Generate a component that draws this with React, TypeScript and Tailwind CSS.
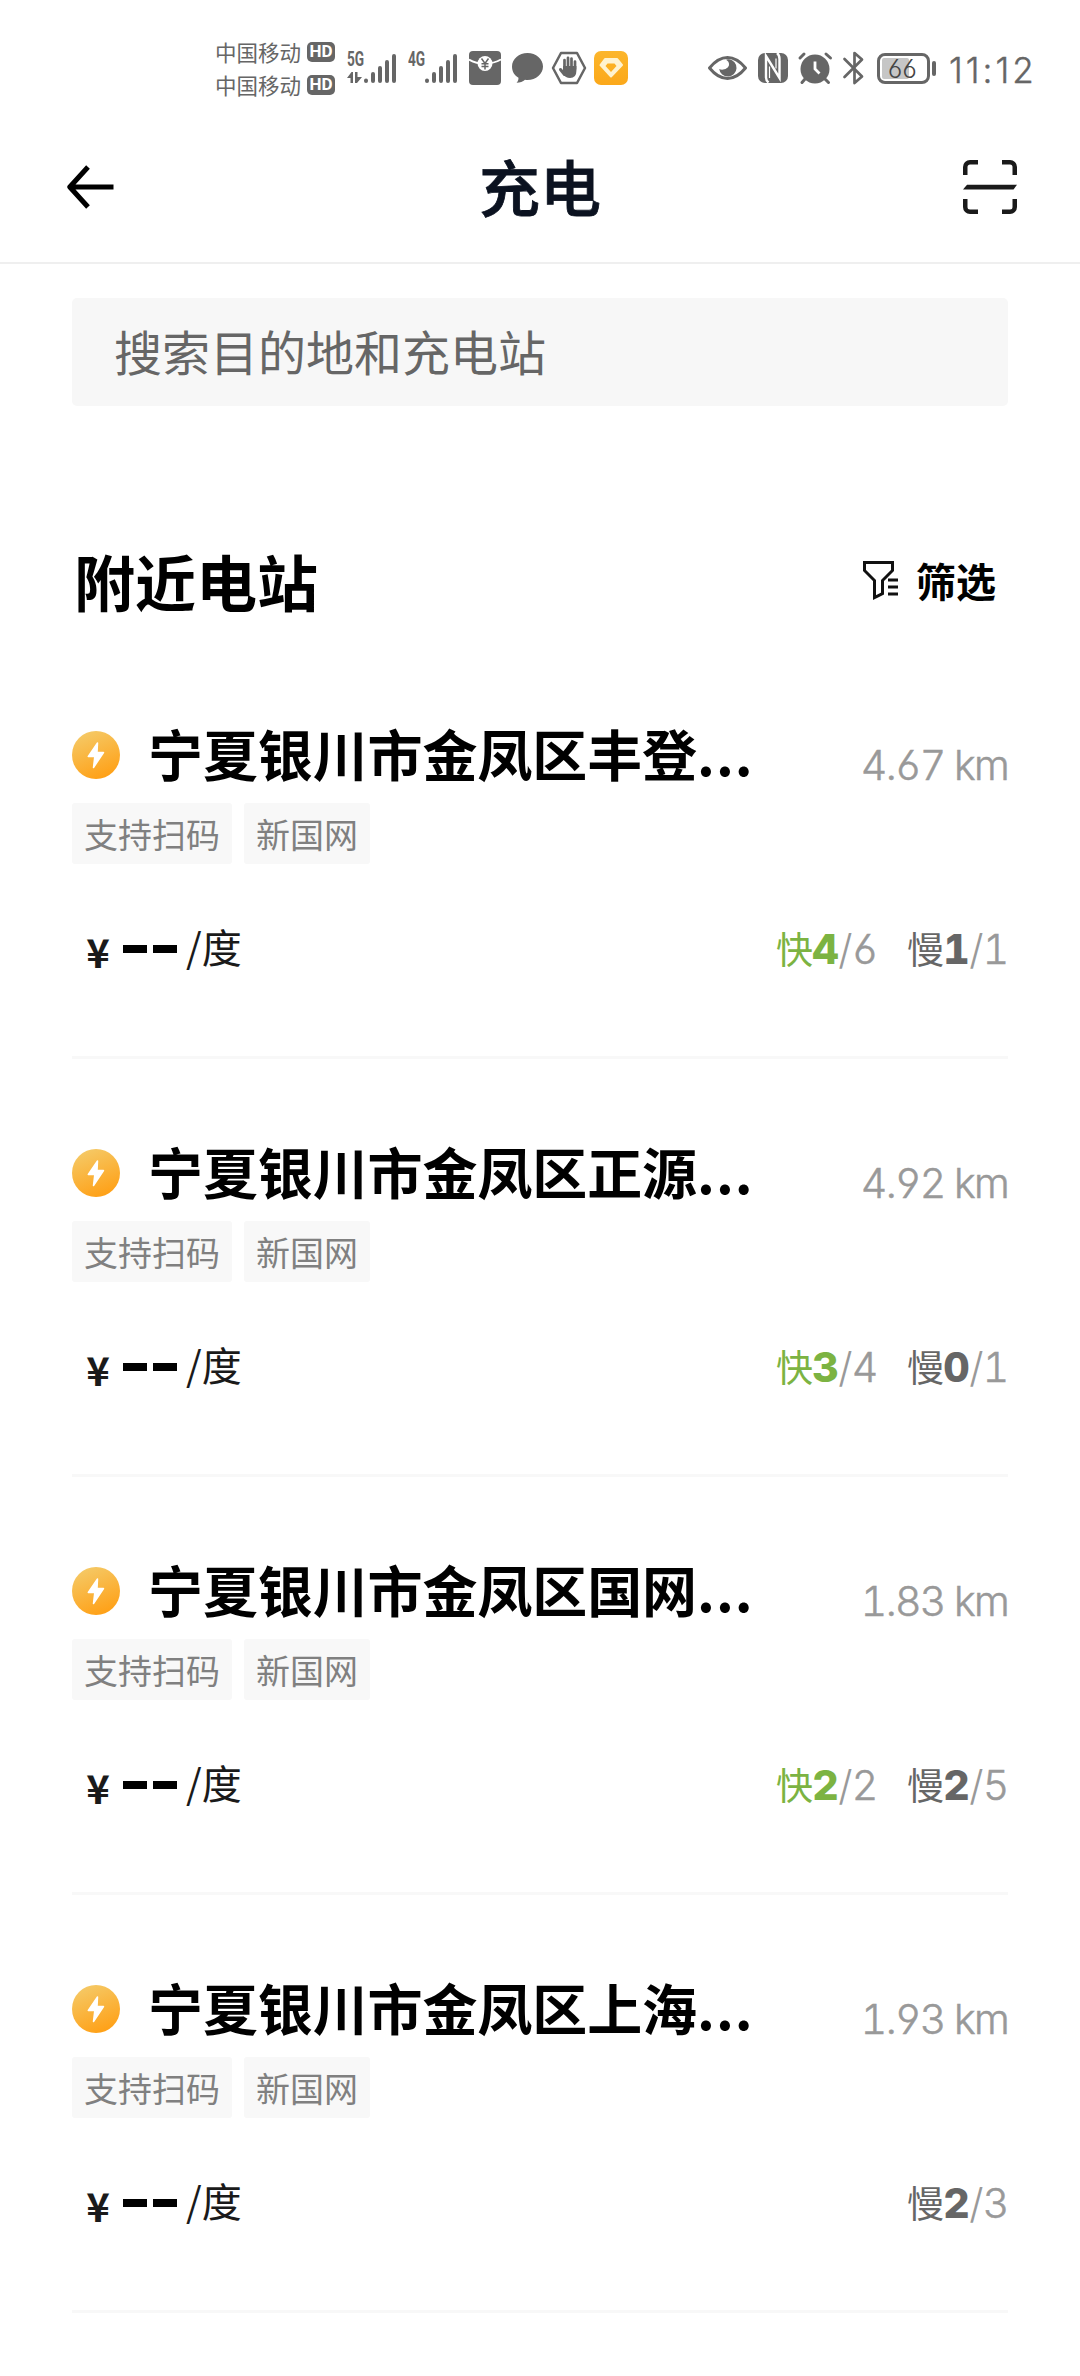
import React from "react";

type Count = { free: number; total: number };
type Station = { name: string; distance: string; fast?: Count; slow: Count };

const stations: Station[] = [
  { name: "宁夏银川市金凤区丰登", distance: "4.67 km", fast: { free: 4, total: 6 }, slow: { free: 1, total: 1 } },
  { name: "宁夏银川市金凤区正源", distance: "4.92 km", fast: { free: 3, total: 4 }, slow: { free: 0, total: 1 } },
  { name: "宁夏银川市金凤区国网", distance: "1.83 km", fast: { free: 2, total: 2 }, slow: { free: 2, total: 5 } },
  { name: "宁夏银川市金凤区上海", distance: "1.93 km", slow: { free: 2, total: 3 } },
];

const latin = "font-['Inter','Noto_Sans_CJK_SC',sans-serif] [font-feature-settings:'cv03','cv04','tnum']";

function Carrier() {
  return (
    <div className="flex h-[33px] items-center gap-[6px]">
      <span className="text-[21.5px] leading-[33px] font-normal">中国移动</span>
      <span className="flex h-[20px] w-[28px] items-center justify-center rounded-[5px] bg-[#666] font-['Roboto',sans-serif] text-[17px] leading-none font-bold text-white">
        HD
      </span>
    </div>
  );
}

function Signal({ label, data }: { label: string; data?: boolean }) {
  return (
    <div className="relative h-[32px] w-[52px]">
      <span className="absolute top-0 left-0 origin-left scale-x-[0.7] font-['Roboto',sans-serif] text-[19.500px] leading-[16px] font-bold">{label}</span>
      <svg className="absolute inset-0" width="52" height="32" viewBox="0 0 52 32">
        <g stroke="#666" strokeWidth="4" strokeLinecap="round">
          <path d="M19 28.500v.5M26 22v7M33 16v13M40 10v19M47 4v25" />
        </g>
        {data && <path d="M0 26l4.500-6h1.500v11H3.500v-5zM8 20h2.500v5H15l-5 6H8z" fill="#666" />}
      </svg>
    </div>
  );
}

function StatusBar() {
  return (
    <div className="flex h-[114px] justify-between pr-[47px] pl-[215px] text-[#666]">
      <div className="flex">
        <div className="flex flex-col pt-[35px]">
          <Carrier />
          <Carrier />
        </div>
        <div className="ml-[12px] flex pt-[52px]">
          <Signal label="5G" data />
          <div className="ml-[9px]">
            <Signal label="4G" />
          </div>
        </div>
        <svg className="mt-[50px] ml-[9px]" width="160" height="36" viewBox="0 0 160 36">
          <rect x="0" y="1" width="32" height="34" rx="4" fill="#666" />
          <path d="M0 9.500Q7 13.500 16 13.500T32 9.500" stroke="#fff" strokeWidth="2" fill="none" />
          <circle cx="16" cy="13.500" r="7.500" fill="#fff" />
          <path d="M12.500 8.500l3.500 5 3.500-5M16 13v6.500M12.500 13.800h7M12.500 16.500h7" stroke="#666" strokeWidth="1.500" fill="none" />
          <path d="M58.500 3C67 3 74 9 74 16.500S67 30 58.500 30c-1 0-1.500 0-2.500-.2-2 2-5 3-8.500 3 1.500-1.300 2-3 2-5C45.500 25.500 43 21.500 43 16.500 43 9 50 3 58.500 3z" fill="#666" />
          <path d="M92 3h16l8 15-8 15H92l-8-15z" stroke="#666" strokeWidth="2.500" strokeLinejoin="round" fill="none" />
          <g stroke="#666" strokeLinecap="round" fill="none">
            <path d="M95.500 19v-9M99 18V7.800M102.500 18V8.500M106 19v-7.500" strokeWidth="2.700" />
            <path d="M91.500 19.500l4 5" strokeWidth="3" />
          </g>
          <path d="M94 16h13.400v5q0 7-6.400 7-4.500 0-7-4z" fill="#666" />
          <rect x="125" y="1" width="34" height="34" rx="7" fill="url(#app)" />
          <path d="M136 9h12l5 6L142 26.500 131.500 15z" fill="#fff3cf" stroke="#fff3cf" strokeWidth="2" strokeLinejoin="round" />
          <path d="M138.500 13.500h7l2 2.500-5.500 6-5.500-6z" fill="#fcb021" />
          <defs>
            <linearGradient id="app" x1="0" y1="0" x2="0" y2="1">
              <stop offset="0" stopColor="#fcb62c" />
              <stop offset="1" stopColor="#fba81a" />
            </linearGradient>
          </defs>
        </svg>
      </div>
      <div className="flex">
        <svg className="mt-[50px]" width="156" height="36" viewBox="0 0 156 36">
          <path d="M1.500 18Q10 7.500 19.500 7.500T37.500 18Q29 28.500 19.500 28.500T1.500 18z" fill="none" stroke="#666" strokeWidth="3" strokeLinejoin="round" />
          <path d="M21 9.300a8.700 8.700 0 1 1-9.800 9.700c3.500 2 9.300-.5 9.800-4 .3-2.500-1-4-3-5.200 1-.4 2-.5 3-.5z" fill="#666" />
          <rect x="50" y="3" width="30" height="30" rx="7" fill="#666" />
          <path d="M60.500 32.500q-2.500-2-2.500-5V6L71.500 28V9q0-4-2.500-6" stroke="#fff" strokeWidth="2.400" fill="none" />
          <path d="M61.500 16.500V28M68 8.500v10" stroke="#fff" strokeWidth="1.200" fill="none" />
          <circle cx="107" cy="19" r="14.500" fill="#666" />
          <path d="M107 11.500V19l4.500 4.500" stroke="#fff" strokeWidth="2.800" fill="none" />
          <path d="M92 8l4-4M118 4l4.500 4M97 29l-3 3.500M117 29l3.500 3.500" stroke="#666" strokeWidth="3" strokeLinecap="round" />
          <path d="M136.500 9L154 26.500l-7.500 6.500V3L154 9.500 136.500 27" stroke="#666" strokeWidth="2.700" fill="none" strokeLinejoin="round" strokeLinecap="round" />
        </svg>
        <div className="mt-[53px] ml-[13px] flex h-[31px] items-center">
          <div className="flex h-[31px] w-[53px] rounded-[8px] border-[3px] border-[#666] p-[2px]">
            <div className={`${latin} h-full w-[27px] rounded-[2px] bg-[#c6c6c6] pl-[5px] text-[25px] leading-[22px] font-light tracking-[-1.700px] text-[#444]`}>66</div>
          </div>
          <div className="ml-[2px] h-[15px] w-[4px] rounded-full bg-[#666]" />
        </div>
        <span className="mt-[50px] ml-[13px] w-[84px] font-['Inter',sans-serif] text-[35px] leading-[40px] font-light tracking-[3px] whitespace-nowrap [-webkit-text-stroke:0.4px_#666]">
          11:12
        </span>
      </div>
    </div>
  );
}

function Header() {
  return (
    <header className="grid h-[150px] grid-cols-[1fr_auto_1fr] items-start border-b-2 border-[#efefef] pr-[63px] pl-[63px]">
      <svg className="mt-[50px] ml-[4px]" width="48" height="46" viewBox="0 0 48 46" fill="none" stroke="#000" strokeWidth="5">
        <path d="M21 3L2.800 23 21 43M3 23h43.500" strokeLinejoin="round" />
      </svg>
      <h1 className="mt-[30px] text-[61px] leading-[84px] font-medium text-[#0b1220] [-webkit-text-stroke:0.8px_#0b1220]">充电</h1>
      <svg className="mt-[46px] justify-self-end" width="54" height="54" viewBox="0 0 54 54" fill="none" stroke="#1a1a1a" strokeWidth="4.500">
        <path d="M2.250 15V7a4.750 4.750 0 0 1 4.750-4.750H15M39 2.250h8A4.750 4.750 0 0 1 51.750 7v8M51.750 39v8A4.750 4.750 0 0 1 47 51.750h-8M15 51.750H7A4.750 4.750 0 0 1 2.250 47v-8" />
        <path d="M4 24.800h50l-3.500 4.700H0z" fill="#1a1a1a" stroke="none" />
      </svg>
    </header>
  );
}

function BoltBadge() {
  return (
    <svg width="48" height="48" viewBox="0 0 48 48">
      <defs>
        <linearGradient id="bolt" x1="0.300" y1="0" x2="0.700" y2="1">
          <stop offset="0" stopColor="#f5c966" />
          <stop offset="1" stopColor="#ff9f14" />
        </linearGradient>
      </defs>
      <circle cx="24" cy="24" r="24" fill="url(#bolt)" />
      <path d="M25.500 12L16.300 25.500h6.500L21.500 36.500 31.500 21.500h-6.500z" fill="#fff" stroke="#fff" strokeWidth="1.500" strokeLinejoin="round" />
    </svg>
  );
}

function Tag({ children }: { children: React.ReactNode }) {
  return <span className="h-[61px] rounded-[3px] bg-[#f8f8f8] px-[12px] text-[34px] leading-[62px] text-[#808080]">{children}</span>;
}

function Availability({ label, count, fast }: { label: string; count: Count; fast?: boolean }) {
  return (
    <div className={`flex items-center ${fast ? "text-[#7cb342]" : "text-[#666]"}`}>
      <span className="mt-[-3px] text-[37px] leading-[54px]">{label}</span>
      <span className={`${latin} flex w-[25px] justify-center text-[41px] leading-[56px] font-extrabold`}>{count.free}</span>
      <span className={`${latin} flex w-[15px] justify-center text-[41px] leading-[56px] font-light text-[#999]`}>/</span>
      <span className={`${latin} flex w-[24px] justify-center text-[41px] leading-[56px] font-light text-[#999] [-webkit-text-stroke:0.5px_#999]`}>{count.total}</span>
    </div>
  );
}

function StationCard({ station }: { station: Station }) {
  return (
    <article className="flex h-[418px] flex-col border-b-[3px] border-[#f8f8f8] pt-[78px]">
      <div className="flex h-[84px] items-start">
        <div className="mt-[12px]">
          <BoltBadge />
        </div>
        <h3 className="mt-[-2px] ml-[28px] text-[55px] leading-[70px] font-bold tracking-[-0.1px] whitespace-nowrap text-black">
          {station.name}
          <span className="tracking-[1px]">...</span>
        </h3>
        <span className={`${latin} mt-[18px] ml-auto text-[41px] leading-[56px] font-light tracking-[-1.700px] whitespace-nowrap text-[#999] [-webkit-text-stroke:0.5px_#999]`}>
          {station.distance}
        </span>
      </div>
      <div className="flex gap-[12px]">
        <Tag>支持扫码</Tag>
        <Tag>新国网</Tag>
      </div>
      <div className="mt-[57px] flex h-[56px] items-center justify-between pl-[14px]">
        <div className="flex items-center text-[#1a1a1a]">
          <span className="mt-[3px] w-[24px] text-center text-[40px] leading-[56px] font-bold">¥</span>
          <span className="ml-[13px] flex gap-[6px]">
            <span className="h-[8px] w-[24px] bg-black" />
            <span className="h-[8px] w-[24px] bg-black" />
          </span>
          <span className="mt-[-6px] ml-[9px] text-[40px] leading-[56px]">/度</span>
        </div>
        <div className="flex gap-[30px]">
          {station.fast && <Availability label="快" count={station.fast} fast />}
          <Availability label="慢" count={station.slow} />
        </div>
      </div>
    </article>
  );
}

export default function App() {
  return (
    <div className="h-[2376px] w-[1080px] overflow-hidden bg-white font-['Noto_Sans_CJK_SC',sans-serif]">
      <StatusBar />
      <Header />
      <main className="px-[72px] pt-[34px]">
        <div className="h-[108px] rounded-[5px] bg-[#f7f7f7] pl-[42px] text-[48px] leading-[105px] text-[#666]">搜索目的地和充电站</div>
        <div className="mt-[133px] flex h-[84px] items-center justify-between pr-[12px]">
          <h2 className="pl-[2px] text-[61px] leading-[84px] font-bold text-black">附近电站</h2>
          <div className="flex items-center gap-[16px]">
            <svg className="mb-[2px]" width="38" height="40" viewBox="0 0 38 40" fill="none" stroke="#111">
              <path d="M2.500 2.500h28v8L20.500 20.500v13l-8 4v-17L2.500 10.500z" strokeWidth="3" />
              <path d="M26 20h10M26 27h10M26 34h10" strokeWidth="2.800" />
            </svg>
            <span className="mt-[-2px] text-[40px] leading-[56px] font-bold text-black">筛选</span>
          </div>
        </div>
        <section className="mt-[18px]">
          {stations.map((s) => (
            <StationCard key={s.name} station={s} />
          ))}
        </section>
      </main>
    </div>
  );
}
